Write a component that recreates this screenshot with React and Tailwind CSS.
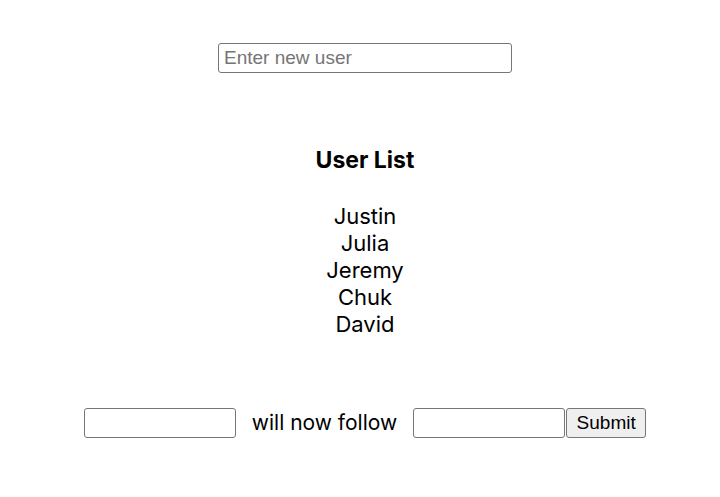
export default function App() {
  const users = ["Justin", "Julia", "Jeremy", "Chuk", "David"];
  const inputCls =
    "h-[30px] border border-[#767676] rounded-[3px] px-[5px] text-[19px] text-black outline-none font-['Liberation_Sans',Arial,sans-serif]";
  return (
    <div className="min-h-[497px] w-full bg-white pt-[43px] pl-[10px] flex flex-col items-center font-['Inter','Noto_Sans',sans-serif]">
      <input
        type="text"
        placeholder="Enter new user"
        className={`${inputCls} w-[294px] placeholder:text-[#757575]`}
      />
      <h2 className="mt-[73px] text-[23px] leading-[28px] font-bold text-black">User List</h2>
      <ul className="mt-[29px] flex flex-col items-center text-[22px] leading-[27px] text-black">
        {users.map((u) => (
          <li key={u}>{u}</li>
        ))}
      </ul>
      <div className="mt-[70px] flex items-center">
        <input type="text" className={`${inputCls} w-[152px]`} />
        <span className="mx-[16px] text-[21px] leading-[28px] text-black">will now follow</span>
        <input type="text" className={`${inputCls} w-[152px]`} />
        <button className="ml-[1px] h-[30px] w-[80px] border border-[#767676] rounded-[3px] bg-[#efefef] text-[19px] text-black font-['Liberation_Sans',Arial,sans-serif]">
          Submit
        </button>
      </div>
    </div>
  );
}
